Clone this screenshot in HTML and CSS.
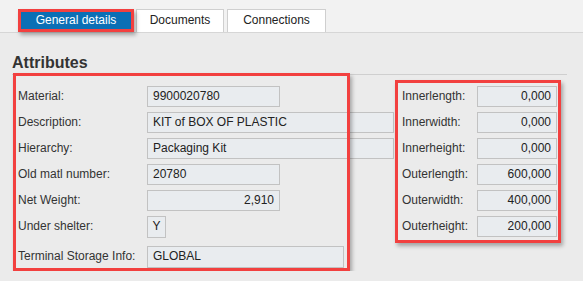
FILE: index.html
```html
<!DOCTYPE html>
<html lang="en">
<head>
    <meta charset="UTF-8">
    <title>Material attributes</title>
    <link rel="stylesheet" href="styles.css">
</head>
<body>
    <div class="tabbar">
        <div class="tab tab-active">General details</div>
        <div class="tab tab-docs">Documents</div>
        <div class="tab tab-conn">Connections</div>
    </div>

    <div class="content">
        <h2 class="section-title">Attributes</h2>

        <div class="fields">
            <div class="col col-main">
                <div class="row"><span class="label">Material:</span><span class="value w-md">9900020780</span></div>
                <div class="row"><span class="label">Description:</span><span class="value w-lg">KIT of BOX OF PLASTIC</span></div>
                <div class="row"><span class="label">Hierarchy:</span><span class="value w-lg">Packaging Kit</span></div>
                <div class="row"><span class="label">Old matl number:</span><span class="value w-md">20780</span></div>
                <div class="row"><span class="label">Net Weight:</span><span class="value w-md num">2,910</span></div>
                <div class="row row-tall"><span class="label">Under shelter:</span><span class="value w-xs">Y</span></div>
                <div class="row row-tall row-last"><span class="label">Terminal Storage Info:</span><span class="value w-wide">GLOBAL</span></div>
            </div>

            <div class="col col-dims">
                <div class="row"><span class="label">Innerlength:</span><span class="value num">0,000</span></div>
                <div class="row"><span class="label">Innerwidth:</span><span class="value num">0,000</span></div>
                <div class="row"><span class="label">Innerheight:</span><span class="value num">0,000</span></div>
                <div class="row"><span class="label">Outerlength:</span><span class="value num">600,000</span></div>
                <div class="row"><span class="label">Outerwidth:</span><span class="value num">400,000</span></div>
                <div class="row"><span class="label">Outerheight:</span><span class="value num">200,000</span></div>
            </div>
        </div>
    </div>
</body>
</html>
```

FILE: styles.css
```css
body {
    margin: 0;
    background-color: #ebebeb;
    font-family: "Liberation Sans", Arial, sans-serif;
    font-size: 12px;
    color: #333333;
}

/* tab strip */
.tabbar {
    height: 32px;
    display: flex;
    align-items: flex-end;
    padding-left: 18px;
    background-color: #f2f2f2;
    border-bottom: 1px solid #d6d6d6;
}
.tab {
    height: 23px;
    box-sizing: border-box;
    border: 1px solid #cfcfcf;
    border-bottom: none;
    background-color: #ffffff;
    line-height: 21px;
    text-align: center;
    color: #222222;
}
.tab-active {
    width: 116px;
    border: 3px solid #f2403f;
    line-height: 17px;
    background-color: #0b6fb5;
    color: #ffffff;
    box-shadow: 2px 3px 4px rgba(0, 0, 0, 0.3);
    position: relative;
    z-index: 1;
}
.tab-docs {
    width: 88px;
    margin-left: 2px;
}
.tab-conn {
    width: 99px;
    margin-left: 3px;
}

/* attributes section */
.section-title {
    margin: 19px 16px 0 12px;
    font-size: 16px;
    line-height: 22px;
    font-weight: bold;
    color: #333333;
    border-bottom: 1px solid #cfcfcf;
}
.fields {
    display: flex;
    align-items: flex-start;
    margin: -2px 0 0 13px;
}
.col {
    position: relative;
    display: flex;
    flex-direction: column;
    gap: 5px;
    box-sizing: border-box;
}
/* red highlight frames drawn over the fields */
.col::after {
    content: "";
    position: absolute;
    top: 0;
    left: 0;
    bottom: 0;
    box-sizing: border-box;
    border: 3px solid #f2403f;
    box-shadow: 2px 3px 4px rgba(0, 0, 0, 0.3);
    pointer-events: none;
}
.col-main {
    width: 382px;
    padding: 13px 0 3px 5px;
}
.col-main::after {
    width: 337px;
}
.col-dims {
    margin-top: 7px;
    padding: 6px 4px 6px 7px;
}
.col-dims::after {
    right: 0;
}

.row {
    display: flex;
    height: 21px;
}
.row-tall {
    height: 22px;
}
.row-last {
    margin-top: 3px;
}
.label {
    line-height: 21px;
    white-space: nowrap;
}
.col-main .label {
    width: 129px;
}
.col-dims .label {
    width: 75px;
}
.value {
    box-sizing: border-box;
    width: 80px;
    height: 100%;
    padding: 0 5px;
    border: 1px solid #c2c2c2;
    background-color: #e9ecef;
    line-height: 18px;
    white-space: nowrap;
    color: #222222;
}
.num {
    text-align: right;
}
.w-md {
    width: 133px;
}
.w-lg {
    width: 247px;
}
.w-xs {
    width: 19px;
    padding: 0;
    line-height: 19px;
    text-align: center;
}
.w-wide {
    width: 197px;
    line-height: 19px;
}
```
